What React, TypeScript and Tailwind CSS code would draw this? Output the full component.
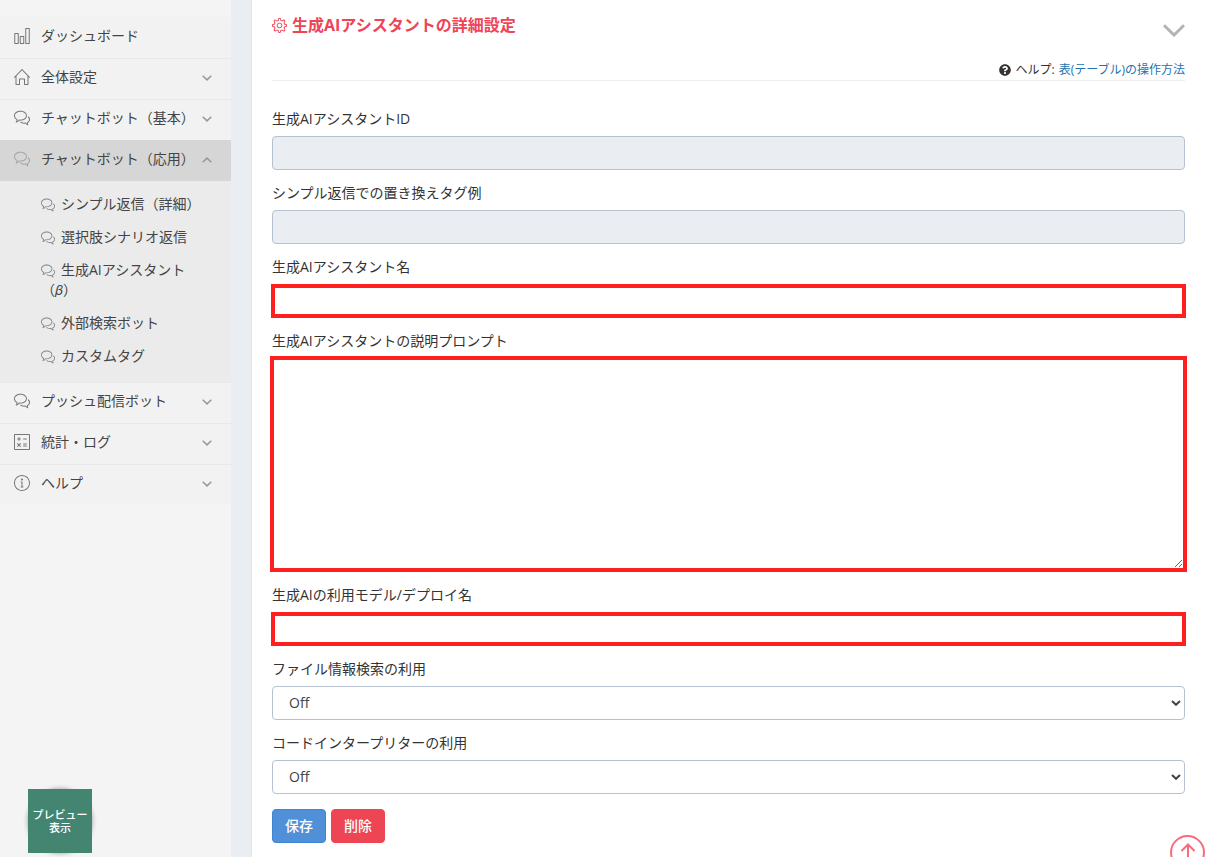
import React, { useState } from 'react';
import { SlBubbles, SlCalculator, SlChart, SlHome, SlInfo, SlSettings } from 'react-icons/sl';
import { FaQuestionCircle } from 'react-icons/fa';

interface MenuItem {
  id: string;
  label: string;
  icon: React.ComponentType<{ className?: string }>;
  expandable?: boolean;
  children?: string[];
}

const menuItems: MenuItem[] = [
  { id: 'dashboard', label: 'ダッシュボード', icon: SlChart },
  { id: 'settings', label: '全体設定', icon: SlHome, expandable: true },
  { id: 'basic', label: 'チャットボット（基本）', icon: SlBubbles, expandable: true },
  {
    id: 'advanced',
    label: 'チャットボット（応用）',
    icon: SlBubbles,
    expandable: true,
    children: [
      'シンプル返信（詳細）',
      '選択肢シナリオ返信',
      '生成AIアシスタント（𝛽）',
      '外部検索ボット',
      'カスタムタグ',
    ],
  },
  { id: 'push', label: 'プッシュ配信ボット', icon: SlBubbles, expandable: true },
  { id: 'stats', label: '統計・ログ', icon: SlCalculator, expandable: true },
  { id: 'help', label: 'ヘルプ', icon: SlInfo, expandable: true },
];

function Chevron({ up, className }: { up?: boolean; className?: string }) {
  return (
    <svg viewBox="0 0 10 6" fill="none" stroke="currentColor" strokeWidth="1.5" className={className}>
      <path d={up ? 'M0.7 5.3 5 1.1 9.3 5.3' : 'M0.7 0.7 5 4.9 9.3 0.7'} />
    </svg>
  );
}

function Sidebar() {
  const [openId, setOpenId] = useState('advanced');

  return (
    <nav className="w-[231px] shrink-0 bg-[#f4f4f4] pt-[17px] text-sm/5 text-[#444]">
      <ul>
        {menuItems.map((item) => {
          const Icon = item.icon;
          const isOpen = openId === item.id;

          return (
            <li key={item.id} className="group">
              <a
                href="#"
                onClick={() => setOpenId(item.id)}
                className={`flex h-[41px] items-center border-t pr-[19px] pb-1 pl-3.5 group-first:border-[#f2f2f2] ${
                  isOpen ? 'border-[#d6d6d6] bg-[#d6d6d6]' : 'border-[#e8e8e8] bg-[#f2f2f2]'
                }`}
              >
                <Icon className={`h-4 w-4 ${isOpen ? 'text-[#a3a3a3]' : 'text-[#777]'}`} />
                <span className="ml-[11px] flex-1 whitespace-nowrap">{item.label}</span>
                {item.expandable && <Chevron up={isOpen} className="mt-0.5 h-1.5 w-2.5 text-[#999]" />}
              </a>
              {isOpen && item.children && (
                <ul className="bg-[#ebebeb] pt-[7px] pb-[9px]">
                  {item.children.map((child) => (
                    <li key={child}>
                      <a href="#" className="block pt-1.5 pr-5 pb-[7px] pl-[41px]">
                        <SlBubbles className="mr-1.5 inline-block h-3.5 w-3.5 align-[-3px] text-[#888]" />
                        {child}
                      </a>
                    </li>
                  ))}
                </ul>
              )}
            </li>
          );
        })}
      </ul>
    </nav>
  );
}

interface FieldProps {
  id: string;
  label: string;
  children: React.ReactNode;
}

function Field({ id, label, children }: FieldProps) {
  return (
    <div className="mb-[13px]">
      <label htmlFor={id} className="mb-[7px] block text-sm/5">
        {label}
      </label>
      {children}
    </div>
  );
}

function OnOffSelect({ id }: { id: string }) {
  return (
    <div className="relative">
      <select
        id={id}
        defaultValue="off"
        className="block h-[34px] w-full appearance-none rounded border border-[#b6c2d2] bg-white px-4 text-sm text-[#444]"
      >
        <option value="off">Off</option>
        <option value="on">On</option>
      </select>
      <svg
        viewBox="0 0 10 6"
        fill="none"
        stroke="#444"
        strokeWidth="2"
        className="pointer-events-none absolute top-3.5 right-1 h-1.5 w-2.5"
      >
        <path d="M1 1 5 4.8 9 1" />
      </svg>
    </div>
  );
}

export default function App() {
  return (
    <div className="flex min-h-screen bg-[#eaedf2] font-['Open_Sans','Noto_Sans_CJK_JP',sans-serif] text-[#333]">
      <Sidebar />

      <main className="ml-5 min-w-0 flex-1 border-l border-[#dfe5ee] bg-white px-5 pt-[13px]">
        <div className="flex h-[47px] items-start justify-between">
          <h1 className="flex items-center gap-[5px] text-base/6 font-bold text-[#ee4455]">
            <SlSettings className="h-[15px] w-[15px]" />
            生成AIアシスタントの詳細設定
          </h1>
          <button type="button" aria-label="折りたたむ" className="mt-[11px]">
            <svg viewBox="0 0 22 13" fill="none" stroke="#b3b3b3" strokeWidth="3" className="h-[13px] w-[22px]">
              <path d="M1 1.2 11 11 21 1.2" />
            </svg>
          </button>
        </div>

        <p className="mb-7 flex items-center justify-end gap-1 border-b border-[#eaedf2] text-xs/5">
          <FaQuestionCircle className="h-3 w-3" />
          <span>ヘルプ:</span>
          <a href="#" className="text-[#2573ae]">
            表(テーブル)の操作方法
          </a>
        </p>

        <form onSubmit={(e) => e.preventDefault()}>
          <Field id="assistant-id" label="生成AIアシスタントID">
            <input
              id="assistant-id"
              type="text"
              readOnly
              className="block h-[34px] w-full rounded border border-[#b6c2d2] bg-[#eaedf2] px-3 text-sm"
            />
          </Field>
          <Field id="tag-example" label="シンプル返信での置き換えタグ例">
            <input
              id="tag-example"
              type="text"
              readOnly
              className="block h-[34px] w-full rounded border border-[#b6c2d2] bg-[#eaedf2] px-3 text-sm"
            />
          </Field>
          <Field id="assistant-name" label="生成AIアシスタント名">
            <div className="-mx-px">
              <input
                id="assistant-name"
                type="text"
                className="block h-[34px] w-full border-4 border-[#ff1f1f] bg-white px-3 text-sm"
              />
            </div>
          </Field>
          <Field id="prompt" label="生成AIアシスタントの説明プロンプト">
            <div className="-mx-0.5 -mt-0.5">
              <textarea
                id="prompt"
                className="block h-[216px] w-full resize-y border-4 border-[#ff1f1f] bg-white px-3 py-1.5 text-sm"
              />
            </div>
          </Field>
          <Field id="model" label="生成AIの利用モデル/デプロイ名">
            <div className="-mx-px">
              <input
                id="model"
                type="text"
                className="block h-[34px] w-full border-4 border-[#ff1f1f] bg-white px-3 text-sm"
              />
            </div>
          </Field>
          <Field id="file-search" label="ファイル情報検索の利用">
            <OnOffSelect id="file-search" />
          </Field>
          <Field id="code-interpreter" label="コードインタープリターの利用">
            <OnOffSelect id="code-interpreter" />
          </Field>

          <div className="flex gap-[5px] pt-0.5 text-sm text-white">
            <button type="submit" className="h-[34px] w-[54px] rounded border border-[#3f83d3] bg-[#5090d9] font-medium">
              保存
            </button>
            <button type="button" className="h-[34px] w-[54px] rounded border border-[#ed4554] bg-[#ed4554] font-medium">
              削除
            </button>
          </div>
        </form>
      </main>

      {/* Floating buttons */}
      <div className="fixed bottom-1 left-7 rounded-full shadow-[0_0_5px_rgba(0,0,0,0.4)]">
        <button type="button" className="block h-16 w-16 bg-[#448571] text-[11px]/[13px] font-medium text-white">
          プレビュー
          <br />
          表示
        </button>
      </div>
      <button
        type="button"
        aria-label="ページの先頭へ"
        className="fixed right-0 -bottom-[13px] flex h-[35px] w-[35px] justify-center rounded-full border-2 border-[#fb6a7c] pt-1.5 text-[#fb6a7c]"
      >
        <svg viewBox="0 0 16 18" fill="none" stroke="currentColor" strokeWidth="2" className="h-[18px] w-4">
          <path d="M1.5 8 8 1.5 14.5 8M8 2V18" />
        </svg>
      </button>
    </div>
  );
}
